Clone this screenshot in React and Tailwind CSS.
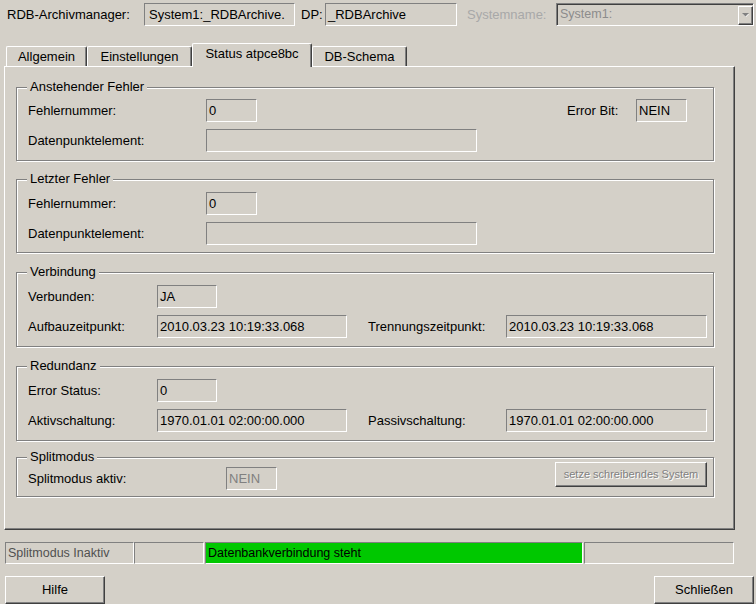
import React from 'react';

const font = "font-['Liberation_Sans',Arial,sans-serif]";

const Field = ({ className = '', children }) => (
  <div
    className={`h-[23px] shrink-0 border border-t-[#808080] border-l-[#808080] border-b-white border-r-white flex items-center pl-[2px] text-[13px] whitespace-nowrap overflow-hidden ${className}`}
  >
    {children}
  </div>
);

const Label = ({ className = '', children }) => (
  <span className={`shrink-0 text-[13px] whitespace-nowrap ${className}`}>{children}</span>
);

const Group = ({ title, className = '', children }) => (
  <div
    className={`relative w-[698px] border border-[#808080] shadow-[inset_1px_1px_0_#fff,1px_1px_0_#fff] pl-[11px] ${className}`}
  >
    <span className="absolute left-[10px] -top-[9px] px-[3px] bg-[#d4d0c8] text-[13px] leading-[16px]">
      {title}
    </span>
    {children}
  </div>
);

const Row = ({ children }) => <div className="flex items-center h-[23px]">{children}</div>;

const RaisedButton = ({ className = '', children }) => (
  <button
    className={`shrink-0 bg-[#d4d0c8] border border-t-white border-l-white border-b-[#404040] border-r-[#404040] shadow-[inset_-1px_-1px_0_#808080] flex items-center justify-center ${className}`}
  >
    {children}
  </button>
);

const Tab = ({ active, className = '', children }) =>
  active ? (
    <div
      className={`relative z-10 h-[24px] bg-[#d4d0c8] border-t border-l border-t-white border-l-white border-r border-r-[#404040] rounded-t-[2px] shadow-[inset_-1px_0_0_#808080] flex items-center justify-center pb-[3px] text-[13px] ${className}`}
    >
      {children}
    </div>
  ) : (
    <div
      className={`h-[20px] mb-[1px] border-t border-l border-t-white border-l-white border-r border-r-[#404040] rounded-t-[2px] shadow-[inset_-1px_0_0_#808080] flex items-center justify-center text-[13px] ${className}`}
    >
      {children}
    </div>
  );

const StatusCell = ({ className = '', children }) => (
  <div
    className={`h-[22px] shrink-0 border border-t-[#808080] border-l-[#808080] border-b-white border-r-white flex items-center pl-[2px] text-[12.5px] whitespace-nowrap ${className}`}
  >
    {children}
  </div>
);

const App = () => {
  return (
    <div className={`w-[756px] h-[604px] bg-[#d4d0c8] text-black overflow-hidden ${font}`}>
      {/* header row */}
      <div className="flex items-center pt-[3px] pl-[7px]">
        <Label className="w-[137px]">RDB-Archivmanager:</Label>
        <Field className="w-[151px] pl-[4px] text-[12px]">System1:_RDBArchive.</Field>
        <Label className="ml-[6px] w-[24px]">DP:</Label>
        <Field className="w-[132px] text-[12.5px]">_RDBArchive</Field>
        <Label className="ml-[10px] w-[89px] text-[#a8a8a8]">Systemname:</Label>
        <div className="w-[198px] h-[23px] border border-t-[#808080] border-l-[#808080] border-b-white border-r-white shadow-[inset_1px_1px_0_#404040] flex items-center">
          <span className="flex-1 pl-[3px] text-[12.5px] text-[#8c8c8c]">System1:</span>
          <div className="w-[15px] h-[19px] mt-[1px] border border-t-white border-l-white border-b-[#404040] border-r-[#404040] shadow-[inset_-1px_-1px_0_#808080] flex items-center justify-center">
            <svg width="8" height="5" viewBox="0 0 8 5">
              <path d="M1 1h6L4 4z" fill="#fff" />
              <path d="M0 0h7L3.5 3.5z" fill="#808080" />
            </svg>
          </div>
        </div>
      </div>

      {/* tabs */}
      <div className="flex items-end pl-[6px] mt-[17px] h-[24px]">
        <Tab className="w-[81px]">Allgemein</Tab>
        <Tab className="w-[105px]">Einstellungen</Tab>
        <Tab active className="w-[120px]">Status atpce8bc</Tab>
        <Tab className="w-[95px]">DB-Schema</Tab>
      </div>

      {/* tab panel */}
      <div className="-mt-px ml-[4px] w-[731px] h-[464px] border border-t-white border-l-white border-r-[#404040] border-b-[#404040] shadow-[inset_-1px_-1px_0_#808080] pt-[20px] pl-[11px] flex flex-col">
        <Group title="Anstehender Fehler" className="h-[74px] pt-[11px] flex flex-col gap-[7px]">
          <Row>
            <Label className="w-[178px]">Fehlernummer:</Label>
            <Field className="w-[51px]">0</Field>
            <Label className="ml-[310px] w-[69px]">Error Bit:</Label>
            <Field className="w-[51px]">NEIN</Field>
          </Row>
          <Row>
            <Label className="w-[178px]">Datenpunktelement:</Label>
            <Field className="w-[271px]" />
          </Row>
        </Group>

        <Group title="Letzter Fehler" className="mt-[18px] h-[74px] pt-[12px] flex flex-col gap-[7px]">
          <Row>
            <Label className="w-[178px]">Fehlernummer:</Label>
            <Field className="w-[51px]">0</Field>
          </Row>
          <Row>
            <Label className="w-[178px]">Datenpunktelement:</Label>
            <Field className="w-[271px]" />
          </Row>
        </Group>

        <Group title="Verbindung" className="mt-[19px] h-[75px] pt-[12px] flex flex-col gap-[7px]">
          <Row>
            <Label className="w-[129px]">Verbunden:</Label>
            <Field className="w-[60px]">JA</Field>
          </Row>
          <Row>
            <Label className="w-[129px]">Aufbauzeitpunkt:</Label>
            <Field className="w-[190px]">2010.03.23 10:19:33.068</Field>
            <Label className="ml-[21px] w-[138px]">Trennungszeitpunkt:</Label>
            <Field className="w-[201px]">2010.03.23 10:19:33.068</Field>
          </Row>
        </Group>

        <Group title="Redundanz" className="mt-[19px] h-[75px] pt-[12px] flex flex-col gap-[7px]">
          <Row>
            <Label className="w-[129px]">Error Status:</Label>
            <Field className="w-[60px]">0</Field>
          </Row>
          <Row>
            <Label className="w-[129px]">Aktivschaltung:</Label>
            <Field className="w-[190px]">1970.01.01 02:00:00.000</Field>
            <Label className="ml-[21px] w-[138px]">Passivschaltung:</Label>
            <Field className="w-[201px]">1970.01.01 02:00:00.000</Field>
          </Row>
        </Group>

        <Group title="Splitmodus" className="mt-[16px] h-[40px] pt-[9px]">
          <div className="flex items-start">
            <Label className="w-[198px] leading-[23px]">Splitmodus aktiv:</Label>
            <Field className="w-[51px] text-[#808080]">NEIN</Field>
            <RaisedButton className="ml-[278px] -mt-[5px] w-[152px] h-[25px] text-[11px] text-[#808080] [text-shadow:1px_1px_0_#fff]">
              setze schreibendes System
            </RaisedButton>
          </div>
        </Group>
      </div>

      {/* status bar */}
      <div className="flex mt-[12px] ml-[5px]">
        <StatusCell className="w-[129px] text-[#505050]">Splitmodus Inaktiv</StatusCell>
        <StatusCell className="w-[70px]" />
        <StatusCell className="ml-[1px] w-[378px] bg-[#00c800]">Datenbankverbindung steht</StatusCell>
        <StatusCell className="ml-[1px] w-[150px]" />
      </div>

      {/* buttons */}
      <div className="flex justify-between mt-[12px] pl-[5px] pr-[2px]">
        <RaisedButton className="w-[100px] h-[28px] text-[13px]">Hilfe</RaisedButton>
        <RaisedButton className="w-[100px] h-[28px] text-[13px]">Schließen</RaisedButton>
      </div>
    </div>
  );
};

export default App;
